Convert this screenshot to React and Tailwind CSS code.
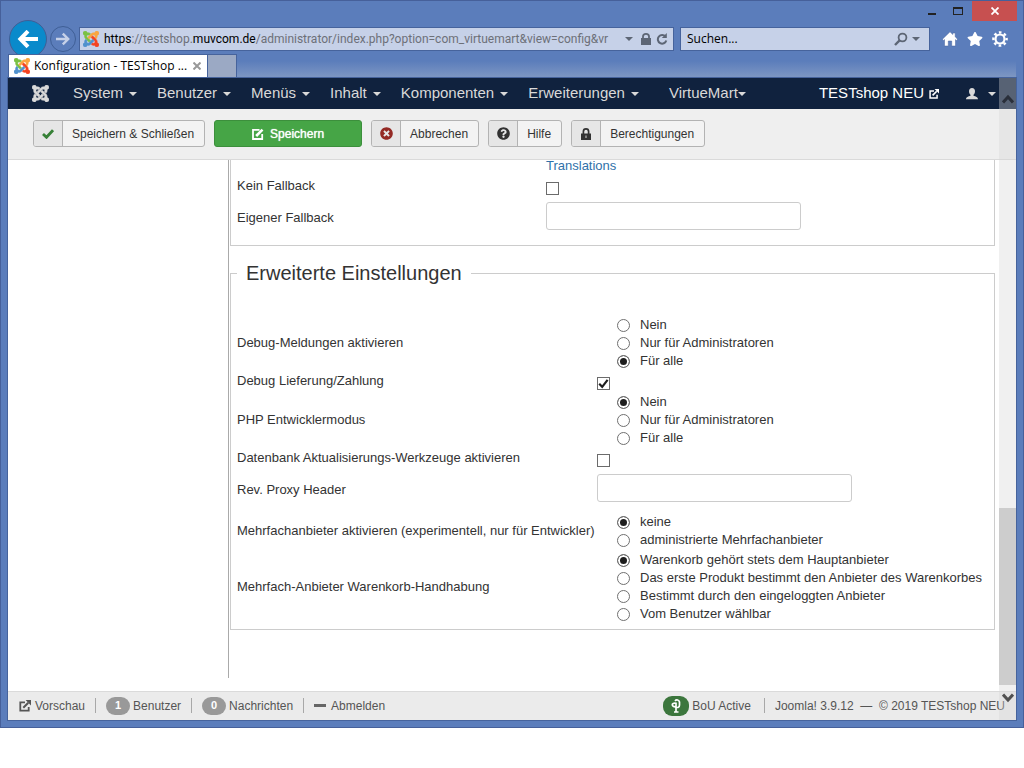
import React from "react";
import { FaTimesCircle, FaQuestionCircle, FaStar } from "react-icons/fa";

const JOOMLA = [
  ["M.6 92.1C.6 58.8 27.4 32 60.4 32c30 0 54.5 21.9 59.2 50.2 32.6-7.6 67.1.6 96.5 30l-44.3 44.3c-20.5-20.5-42.6-16.3-55.4-3.5-14.3 14.3-14.3 37.9 0 52.2l99.5 99.5-44 44.3c-87.7-87.2-49.7-49.7-99.8-99.7-26.8-26.5-35-64.8-24.8-98.9C20.4 144.6.6 120.7.6 92.1z", "#7ac143"],
  ["M130.1 208.5l44.3 44.3c10-10 89.7-89.7 99.7-99.8 14.3-14.3 37.6-14.3 51.9 0 12.8 12.8 17 35-3.5 55.4l44 44.3c31.2-31.2 38.5-67.6 28.9-101.2 29.2-4.1 51.9-29.2 51.9-59.5 0-33.2-26.8-60.1-59.8-60.1-30.3 0-55.4 22.5-59.5 51.6-33.8-9.9-71.7-1.5-98.3 25.1-18.3 19.1-71.1 71.5-99.6 99.9z", "#f9a541"],
  ["M396.4 360.7c8.2-32.7-.9-68.5-26.3-93.9-11.8-12.2 5 4.7-99.5-99.7l-44.3 44.3 99.7 99.7c14.3 14.3 14.3 37.6 0 51.9-12.8 12.8-35 17-55.4-3.5l-44 44.3c27.6 30.2 68 38.8 102.7 28 5.5 27.4 29.7 48.1 58.9 48.1 33 0 59.8-26.8 59.8-60.1 0-30.2-22.5-55-51.6-59.1z", "#f44321"],
  ["M312.1 307.6l-44-44.3c-87 86.4-50.4 50.4-99.7 99.8-14.3 14.3-37.6 14.3-51.9 0-13.1-13.4-16.9-35.3 3.2-55.4l-44-44.3c-30.2 30.2-38 65.2-29.5 98.3-26.7 6-46.2 29.9-46.2 58.2C0 453.2 26.8 480 59.8 480c28.6 0 52.5-19.8 58.6-46.7 32.7 8.2 68.5-.6 94.2-26 32.1-32 12.2-12.4 99.5-99.7z", "#5091cd"],
];

function Joomla({ mono, className }) {
  return (
    <svg viewBox="0 32 448 448" className={className} aria-hidden="true">
      {JOOMLA.map(([d, color]) => (
        <path key={color} d={d} fill={mono ? "currentColor" : color} stroke={mono ? "currentColor" : color} strokeWidth="14" />
      ))}
    </svg>
  );
}

function Caret({ className = "" }) {
  return (
    <svg viewBox="0 0 8 4" className={"h-1 w-2 shrink-0 " + className} aria-hidden="true">
      <path d="M0 0h8L4 4z" fill="currentColor" />
    </svg>
  );
}

function External({ className }) {
  return (
    <svg viewBox="0 0 12 12" className={className} fill="none" stroke="currentColor" aria-hidden="true">
      <path d="M6 2.3H1.3v8.4h8.4V7" strokeWidth="1.8" />
      <path d="M4.3 7.7l5-5" strokeWidth="2" />
      <path d="M6.6 0H12v5.4z" fill="currentColor" stroke="none" />
    </svg>
  );
}

function WindowControls() {
  return (
    <div className="flex h-5 justify-end pr-[6px] text-[#222]">
      <button aria-label="Minimieren" className="flex w-6 items-center justify-center">
        <svg viewBox="0 0 10 10" className="size-[10px]"><path d="M1 7h8v2H1z" fill="currentColor" /></svg>
      </button>
      <button aria-label="Maximieren" className="flex w-[26px] items-center justify-center pl-[2px]">
        <svg viewBox="0 0 10 10" className="size-[10px]"><path d="M0 1h10v8H0zM1 3v5h8V3z" fillRule="evenodd" fill="currentColor" /></svg>
      </button>
      <button aria-label="Schließen" className="ml-[2px] flex w-[45px] items-center justify-center bg-[#c75050] text-white">
        <svg viewBox="0 0 8 8" className="size-2" stroke="currentColor" strokeWidth="1.8"><path d="M.5.5l7 7M7.5.5l-7 7" /></svg>
      </button>
    </div>
  );
}

function AddressRow() {
  return (
    <div className="flex h-[33px] items-center pr-[15px] pl-2 pt-[2px]">
      <button aria-label="Zurück" className="flex size-[38px] shrink-0 items-center justify-center rounded-full border border-[#3f5f96] bg-[#0a8acb] text-white">
        <svg viewBox="0 0 22 18" className="h-[18px] w-[22px]" fill="none" stroke="currentColor" strokeWidth="4">
          <path d="M21 9H4M11 1.2L3.4 9l7.6 7.8" />
        </svg>
      </button>
      <button aria-label="Vorwärts" className="ml-[3px] flex size-[26px] shrink-0 items-center justify-center rounded-full border border-[#3f5f96] text-[#c6d1e8]">
        <svg viewBox="0 0 14 14" className="size-[14px]" fill="none" stroke="currentColor" strokeWidth="2.4">
          <path d="M0 7h12M6.8 1.6L12.2 7l-5.4 5.4" />
        </svg>
      </button>
      <div className="ml-[3px] flex h-6 min-w-0 flex-1 items-center border border-[#46639c] bg-[#c6d1e8] pr-[5px] pl-[3px] text-[#5d6675]">
        <Joomla className="size-4 shrink-0" />
        <div role="textbox" aria-label="Adresse" tabIndex={0} className="ml-[5px] min-w-0 flex-1 overflow-hidden font-[Roboto,sans-serif] text-[12px] leading-5 whitespace-nowrap text-[#6d7078]">
          <span className="text-black">https</span>://testshop.<span className="text-black">muvcom.de</span>/administrator/index.php?option=com_virtuemart&amp;view=config&amp;vr
        </div>
        <button aria-label="Adressliste" className="ml-[7px]"><Caret /></button>
        <svg viewBox="0 0 10 12" className="ml-2 h-3 w-[10px] shrink-0" aria-label="Sicher">
          <path d="M0 5h10v7H0z" fill="currentColor" />
          <path d="M2 6V3.500a3 2.600 0 0 1 6 0V6" fill="none" stroke="currentColor" strokeWidth="1.800" />
        </svg>
        <button aria-label="Aktualisieren" className="ml-[5px]">
          <svg viewBox="0 0 12 12" className="size-3" fill="none" stroke="currentColor" strokeWidth="2">
            <path d="M9.500 3.600A4.300 4.300 0 1 0 10.300 7.500" />
            <path d="M10.800 0v5H5.800z" fill="currentColor" stroke="none" />
          </svg>
        </button>
      </div>
      <div className="ml-[6px] flex h-6 w-[250px] shrink-0 items-center border border-[#46639c] bg-[#c6d1e8] pr-[9px] pl-[6px] text-[#5d6675]">
        <input aria-label="Suchen" placeholder="Suchen..." className="min-w-0 flex-1 bg-transparent font-['Open_Sans','Noto_Sans',sans-serif] text-[12px] text-black outline-none placeholder:text-black placeholder:opacity-100" />
        <button aria-label="Suche starten">
          <svg viewBox="0 0 14 14" className="size-[14px]" fill="none" stroke="currentColor">
            <circle cx="8.500" cy="5.500" r="3.900" strokeWidth="1.800" />
            <path d="M5.600 8.400L1 13" strokeWidth="2.400" />
          </svg>
        </button>
        <button aria-label="Suchanbieter" className="ml-1"><Caret /></button>
      </div>
      <div className="ml-[12px] flex items-center gap-[9px] text-white">
        <button aria-label="Startseite">
          <svg viewBox="0 0 16 16" className="size-4 overflow-visible" fill="currentColor" stroke="#46639c" strokeWidth=".5">
            <path d="M8 .8l2.800 2.700V2h2.400v3.800L15.600 8.200l-1.200 1.200-.9-.8V15H9.700v-5H6.300v5H2.500V8.600l-.9.800L.4 8.200z" />
          </svg>
        </button>
        <button aria-label="Favoriten"><FaStar className="size-4" /></button>
        <button aria-label="Extras">
          <svg viewBox="0 0 16 16" className="size-4" fill="none" stroke="currentColor">
            <circle cx="8" cy="8" r="4.500" strokeWidth="2.200" />
            <circle cx="8" cy="8" r="6.600" strokeWidth="2.400" strokeDasharray="2.600 2.580" strokeDashoffset="1.300" />
          </svg>
        </button>
      </div>
    </div>
  );
}

function TabRow() {
  return (
    <div className="relative z-10 mx-[7px] flex h-[23px] bg-linear-to-b from-[#5b7dbb] from-30% to-[#7d96c2] to-100%">
      <div className="flex w-[200px] items-center border border-b-0 border-[#46639c] bg-white pr-[6px] pl-[5px]">
        <Joomla className="size-4 shrink-0" />
        <span className="ml-1 flex-1 font-['Open_Sans','Noto_Sans',sans-serif] text-[12px] whitespace-nowrap text-black">Konfiguration - TESTshop ...</span>
        <button aria-label="Tab schließen" className="text-[#999]">
          <svg viewBox="0 0 8 8" className="size-2" stroke="currentColor" strokeWidth="2"><path d="M.5.5l7 7M7.500.5l-7 7" /></svg>
        </button>
      </div>
      <button aria-label="Neuer Tab" className="w-[29px] border border-b-0 border-l-0 border-[#46639c] bg-[#9ba9c4]" />
    </div>
  );
}

const MENU = ["System", "Benutzer", "Menüs", "Inhalt", "Komponenten", "Erweiterungen"];

function Navbar() {
  return (
    <nav className="flex h-[31px] items-center bg-[#10223e] pr-5 pl-6 text-[15px] text-[#d9d9d9]">
      <a href="#joomla" aria-label="Joomla"><Joomla mono className="size-[17px]" /></a>
      <div className="ml-[14px] flex">
        {MENU.map((m) => (
          <button key={m} className="flex items-center gap-[6px] px-[10px]">{m}<Caret /></button>
        ))}
        <button className="ml-[10px] flex items-center px-[10px]">VirtueMart<Caret /></button>
      </div>
      <a href="#site" className="ml-auto flex items-center gap-[5px] text-white">TESTshop NEU<External className="size-[10px]" /></a>
      <button aria-label="Benutzermenü" className="ml-[27px] flex items-center gap-[10px]">
        <svg viewBox="0 0 12 12" className="size-3" fill="currentColor"><path d="M6 0c2 0 3 1.300 3 3.200C9 4.900 8.200 6 7.500 6.700v1C9.500 8.300 12 9 12 11.300H0C0 9 2.500 8.300 4.500 7.700v-1C3.800 6 3 4.900 3 3.200 3 1.300 4 0 6 0z" /></svg>
        <Caret />
      </button>
    </nav>
  );
}

function ToolButton({ icon, children }) {
  return (
    <button className="flex h-[27px] items-stretch overflow-hidden rounded-[3px] border border-[#b3b3b3] bg-[#f3f3f3] text-[12px] text-[#333]">
      <span className="flex w-7 items-center justify-center bg-[#e6e6e6]">{icon}</span>
      <span className="flex items-center border-l border-[#b3b3b3] pr-[10px] pl-[9px]">{children}</span>
    </button>
  );
}

function Toolbar() {
  return (
    <div className="flex h-[51px] items-center gap-[9px] border-b border-[#dadada] bg-[#efefef] pr-5 pb-px pl-[25px]">
      <ToolButton icon={<svg viewBox="0 0 12 10" className="h-[10px] w-3" fill="none" stroke="#378137" strokeWidth="2.800"><path d="M1 5l3.500 3.300L11 1.200" /></svg>}>Speichern &amp; Schließen</ToolButton>
      <button className="flex h-[27px] w-[148px] items-center justify-center gap-[6px] rounded-[3px] border border-[#3c8f3c] bg-[#46a546] text-[12px] text-white">
        <svg viewBox="0 0 12 12" className="size-3" fill="none" stroke="currentColor">
          <path d="M7.500 1.800H1v9.200h9.200V6" strokeWidth="1.800" />
          <path d="M4.200 8l6.300-6.300" strokeWidth="2.600" />
        </svg>
        <span className="[text-shadow:0_0_1px_white]">Speichern</span>
      </button>
      <ToolButton icon={<FaTimesCircle className="size-[13px] text-[#942a25]" />}>Abbrechen</ToolButton>
      <ToolButton icon={<FaQuestionCircle className="size-[13px]" />}>Hilfe</ToolButton>
      <ToolButton
        icon={
          <svg viewBox="0 0 10 12" className="h-3 w-[10px]">
            <path d="M0 5.500h10V12H0z" fill="currentColor" />
            <path d="M2.400 6V3.400a2.600 2.500 0 0 1 5.200 0V6" fill="none" stroke="currentColor" strokeWidth="1.700" />
            <path d="M4.400 7.500h1.200v2.500H4.400z" fill="#bbb" />
          </svg>
        }
      >
        Berechtigungen
      </ToolButton>
    </div>
  );
}

function Check({ id, defaultChecked }) {
  return (
    <span className="relative mt-1 block size-[13px] self-center">
      <input id={id} type="checkbox" defaultChecked={defaultChecked} className="peer block size-[13px] appearance-none border border-[#6b6b6b] bg-white" />
      <svg viewBox="0 0 13 13" className="pointer-events-none absolute inset-0 hidden size-[13px] peer-checked:block" fill="none" stroke="#1e1e1e" strokeWidth="2.200">
        <path d="M2.200 6.800L5.200 9.800L10.600 2.800" />
      </svg>
    </span>
  );
}

function TextField({ id }) {
  return <input id={id} type="text" className="h-7 w-[255px] self-center rounded-[3px] border border-[#ccc] bg-white px-2" />;
}

function RadioRow({ name, label, options, selected, className = "" }) {
  return (
    <div role="radiogroup" aria-labelledby={name} className={"grid grid-cols-[360px_1fr] " + className}>
      <span id={name} className="self-center whitespace-nowrap">{label}</span>
      <div className="pl-5">
        {options.map((o, i) => (
          <label key={o} className="flex h-[18px] items-start gap-[10px] leading-[18px] whitespace-nowrap">
            <input type="radio" name={name} defaultChecked={i === selected} className="mt-[3px] size-[13px] shrink-0 appearance-none rounded-full border border-[#707070] bg-white checked:bg-[#1e1e1e] checked:shadow-[inset_0_0_0_2px_white]" />
            {o}
          </label>
        ))}
      </div>
    </div>
  );
}

function Content() {
  const levels = ["Nein", "Nur für Administratoren", "Für alle"];
  return (
    <main className="flex flex-1 bg-white pr-[21px] pb-[13px] text-[13px] text-[#333]">
      <aside className="w-[220px] shrink-0" />
      <form className="min-w-0 flex-1 border-l border-[#aaa] pl-px">
        <fieldset className="min-w-0 border border-t-0 border-[#ccc] px-[6px] pb-[13px]">
          <div className="grid h-3 grid-cols-[309px_1fr] leading-3">
            <a href="#translations" className="col-start-2 text-[#3071a9]">Translations</a>
          </div>
          <div className="grid h-7 grid-cols-[309px_1fr]">
            <label htmlFor="kein" className="leading-7">Kein Fallback</label>
            <Check id="kein" />
          </div>
          <div className="grid h-8 grid-cols-[309px_1fr]">
            <label htmlFor="eigener" className="self-center pt-[3px]">Eigener Fallback</label>
            <TextField id="eigener" />
          </div>
        </fieldset>
        <fieldset className="mt-[7px] min-w-0 border border-[#ccc] pr-[6px] pb-[6px] pl-[6px]">
          <legend className="px-[9px] text-[20px] leading-10">Erweiterte Einstellungen</legend>
          <RadioRow className="mt-[23px]" name="debug" label="Debug-Meldungen aktivieren" options={levels} selected={2} />
          <div className="grid h-[23px] grid-cols-[360px_1fr]">
            <label htmlFor="lieferung" className="leading-[22px]">Debug Lieferung/Zahlung</label>
            <Check id="lieferung" defaultChecked />
          </div>
          <RadioRow name="php" label="PHP Entwicklermodus" options={levels} selected={0} />
          <div className="grid h-[23px] grid-cols-[360px_1fr]">
            <label htmlFor="datenbank" className="leading-[22px]">Datenbank Aktualisierungs-Werkzeuge aktivieren</label>
            <Check id="datenbank" />
          </div>
          <div className="grid h-9 grid-cols-[360px_1fr]">
            <label htmlFor="proxy" className="self-center pt-[3px]">Rev. Proxy Header</label>
            <TextField id="proxy" />
          </div>
          <RadioRow className="mt-[7px]" name="multi" label="Mehrfachanbieter aktivieren (experimentell, nur für Entwickler)" options={["keine", "administrierte Mehrfachanbieter"]} selected={0} />
          <RadioRow
            className="mt-[2px]"
            name="cart"
            label="Mehrfach-Anbieter Warenkorb-Handhabung"
            options={["Warenkorb gehört stets dem Hauptanbieter", "Das erste Produkt bestimmt den Anbieter des Warenkorbes", "Bestimmt durch den eingeloggten Anbieter", "Vom Benutzer wählbar"]}
            selected={0}
          />
        </fieldset>
      </form>
    </main>
  );
}

function Divider() {
  return <span className="h-[15px] w-px shrink-0 bg-[#a8a8a8]" />;
}

function Badge({ children }) {
  return <span className="flex h-[18px] w-6 items-center justify-center rounded-full bg-[#999] text-[11px] font-bold text-white">{children}</span>;
}

function Footer() {
  return (
    <footer className="flex h-[29px] items-center gap-[10px] border-t border-[#dadada] bg-[#ebebeb] px-[11px] pb-px text-[12px] whitespace-nowrap text-[#555]">
      <a href="#preview" className="flex items-center gap-1"><External className="size-3" />Vorschau</a>
      <Divider />
      <a href="#users" className="flex items-center gap-[3px]"><Badge>1</Badge>Benutzer</a>
      <Divider />
      <a href="#messages" className="flex items-center gap-[3px]"><Badge>0</Badge>Nachrichten</a>
      <Divider />
      <a href="#logout" className="flex items-center gap-[5px]"><span className="h-[3px] w-3 bg-[#666]" />Abmelden</a>
      <div className="ml-auto flex items-center gap-[3px] pr-[3px]">
        <span className="flex h-5 w-[26px] items-center justify-center rounded-[9px] bg-[#3c763d] text-white">
          <svg viewBox="0 0 12 16" className="h-4 w-3" fill="none" stroke="currentColor" strokeWidth="1.700">
            <path d="M6 14V4.500M6 9.500h2a2.500 2.500 0 0 0 1.500-2.500V4A2.500 2.500 0 0 0 5 3M6 8.800C3.500 9 2.300 8 2.300 6.800S3.500 5 6 5.300M4 14h4.500" />
          </svg>
        </span>
        BoU Active
      </div>
      <Divider />
      <span>Joomla! 3.9.12 &nbsp;—&nbsp; © 2019 TESTshop NEU</span>
    </footer>
  );
}

function ScrollBar() {
  return (
    <div className="absolute inset-y-0 right-0 flex w-[17px] flex-col bg-[rgb(214_214_214/0.36)] text-[#2a2f3a]">
      <button aria-label="Nach oben" className="flex h-[42px] items-center justify-center">
        <svg viewBox="0 0 12 10" className="h-[10px] w-3" fill="none" stroke="currentColor" strokeWidth="3"><path d="M1 8.500l5-5.500 5 5.500" /></svg>
      </button>
      <div className="flex-1" />
      <div className="h-[177px] bg-[#cdcdcd]" />
      <button aria-label="Nach unten" className="flex h-[35px] items-start justify-center pt-2 text-[#505050]">
        <svg viewBox="0 0 12 10" className="h-[10px] w-3" fill="none" stroke="currentColor" strokeWidth="3"><path d="M1 1.500L6 7l5-5.500" /></svg>
      </button>
    </div>
  );
}

export default function App() {
  return (
    <div className="flex min-h-screen flex-col bg-white pb-10 font-['Liberation_Sans',Arial,sans-serif]">
      <div className="flex flex-1 flex-col border border-[#46609a] bg-[#5b7dbb] pb-[6px]">
        <WindowControls />
        <AddressRow />
        <TabRow />
        <div className="relative mx-[6px] flex flex-1 flex-col border border-[#46639c]">
          <Navbar />
          <Toolbar />
          <Content />
          <Footer />
          <ScrollBar />
        </div>
      </div>
    </div>
  );
}
